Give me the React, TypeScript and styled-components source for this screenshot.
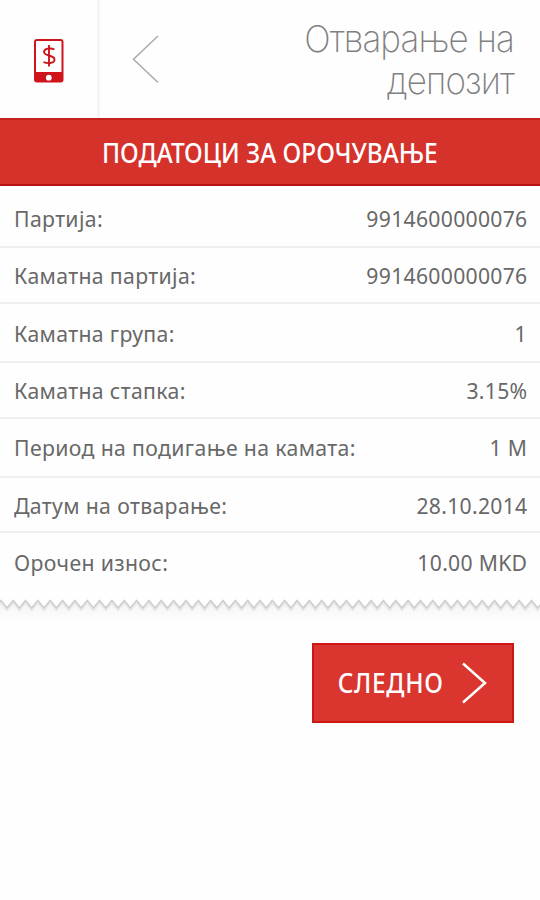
import React from "react";
import styled, { createGlobalStyle } from "styled-components";

const Global = createGlobalStyle`
  * { box-sizing: border-box; }
  body { margin: 0; background: #fefefe; }
`;

const Screen = styled.main`
  width: 540px;
  height: 900px;
  overflow: hidden;
  background: #fefefe;
  font-family: "Noto Sans", "Open Sans", sans-serif;
`;

const Header = styled.header`
  display: flex;
  height: 118px;
`;

const LogoCell = styled.div`
  width: 100px;
  padding: 38px 0 0 33px;
  border-right: 3px solid #f5f5f5;
`;

const BackButton = styled.button`
  width: 92px;
  padding: 34px 0 0 31px;
  border: 0;
  background: none;
  display: flex;
  align-items: flex-start;
`;

const Title = styled.h1`
  flex: 1;
  margin: 0;
  padding: 18px 26px 0 0;
  text-align: right;
  color: #808080;
  font: 200 37px/42px Inter, "Liberation Sans", sans-serif;
`;

const TitleLine = styled.span`
  display: block;
  white-space: nowrap;
  letter-spacing: -0.9px;
  transform: scaleX(0.945);
  transform-origin: right;
`;

const Banner = styled.h2`
  height: 68px;
  margin: 0;
  display: flex;
  align-items: center;
  justify-content: center;
  background: #d6322c;
  border-top: 2px solid #c5221f;
  border-bottom: 2px solid #b91313;
  color: #fff;
  font-size: 27px;
  font-weight: 500;
`;

const Condensed = styled.span<{ $spacing?: number }>`
  white-space: nowrap;
  letter-spacing: ${(p) => p.$spacing ?? 0}px;
  transform: scaleX(0.903);
`;

const Row = styled.div<{ $height: number; $top: number }>`
  height: ${(p) => p.$height}px;
  padding: ${(p) => p.$top}px 13px 0 14px;
  display: flex;
  justify-content: space-between;
  border-bottom: 2px solid #efefef;
  color: #686868;
  font-size: 22px;
  line-height: 30px;
  white-space: nowrap;
  &:last-child { border-bottom: 0; }
`;

const Label = styled.span`
  letter-spacing: 0.37px;
  transform: scaleX(0.965);
  transform-origin: left;
`;

const Value = styled.span`
  letter-spacing: 0.3px;
  transform: scaleX(0.962);
  transform-origin: right;
`;

const TornEdge = styled.svg`
  display: block;
`;

const Actions = styled.footer`
  display: flex;
  justify-content: flex-end;
  padding: 13px 26px 0 0;
`;

const NextButton = styled.button`
  width: 202px;
  height: 80px;
  padding: 0 25px 0 18px;
  display: flex;
  align-items: center;
  justify-content: space-between;
  border: 2px solid #cd1713;
  background: #db352f;
  color: #fff;
  font: 500 27px/34px "Noto Sans", sans-serif;
`;

const rows = [
  { label: "Партија:", value: "9914600000076", height: 62, top: 17 },
  { label: "Каматна партија:", value: "9914600000076", height: 56, top: 12 },
  { label: "Каматна група:", value: "1", height: 59, top: 14 },
  { label: "Каматна стапка:", value: "3.15%", height: 56, top: 12 },
  { label: "Период на подигање на камата:", value: "1 M", height: 59, top: 13 },
  { label: "Датум на отварање:", value: "28.10.2014", height: 55, top: 12 },
  { label: "Орочен износ:", value: "10.00 MKD", height: 66, top: 14 },
];

const step = 6.17;
const edge = Array.from(
  { length: 90 },
  (_, i) => `${(i * step - 5.3).toFixed(2)},${i % 2 ? 1.5 : 9}`,
).join(" ");

export default function App() {
  return (
    <Screen>
      <Global />
      <Header>
        <LogoCell>
          <svg width="32" height="46" viewBox="0 0 32 46">
            <rect x="2" y="2" width="27.5" height="41.5" rx="2" fill="#fff" stroke="#d0141b" strokeWidth="2" />
            <path d="M2 34h27.500v9.500H2z" fill="#d0141b" />
            <circle cx="15.800" cy="39.700" r="2.900" fill="#fff" />
            <path d="M21.500 11.500c-4-2-10.500-1-10.500 2.500 0 4.500 10.500 2.500 10.500 7.500 0 4-7 4.500-11 2.500M16 7v21.500" fill="none" stroke="#d0141b" strokeWidth="1.900" />
          </svg>
        </LogoCell>
        <BackButton aria-label="Назад">
          <svg width="30" height="50" viewBox="0 0 30 50" fill="none" stroke="#aaa" strokeWidth="1.500">
            <path d="M27 2 2.500 25.300 27 48.500" />
          </svg>
        </BackButton>
        <Title>
          <TitleLine>Отварање на</TitleLine>
          <TitleLine>депозит</TitleLine>
        </Title>
      </Header>
      <Banner><Condensed>ПОДАТОЦИ ЗА ОРОЧУВАЊЕ</Condensed></Banner>
      <section>
        {rows.map((r) => (
          <Row key={r.label} $height={r.height} $top={r.top}>
            <Label>{r.label}</Label>
            <Value>{r.value}</Value>
          </Row>
        ))}
      </section>
      <TornEdge width="540" height="31" viewBox="0 0 540 31">
        <defs>
          <linearGradient id="shade" x1="0" y1="0" x2="0" y2="1">
            <stop offset="0" stopColor="#f3f3f3" />
            <stop offset="0.500" stopColor="#f9f9f9" />
            <stop offset="1" stopColor="#fefefe" />
          </linearGradient>
        </defs>
        <polygon points={`${edge} 545,24 -6,24`} fill="url(#shade)" />
        <polyline points={edge} fill="none" stroke="#e9e9e9" strokeWidth="3" transform="translate(0 1.500)" />
        <polyline points={edge} fill="none" stroke="#cecece" strokeWidth="1.500" />
      </TornEdge>
      <Actions>
        <NextButton>
          <Condensed $spacing={0.8}>СЛЕДНО</Condensed>
          <svg width="26" height="44" viewBox="0 0 26 44" fill="none" stroke="#fff" strokeWidth="2.500">
            <path d="M2 2.500 24 22 2 41.500" />
          </svg>
        </NextButton>
      </Actions>
    </Screen>
  );
}
